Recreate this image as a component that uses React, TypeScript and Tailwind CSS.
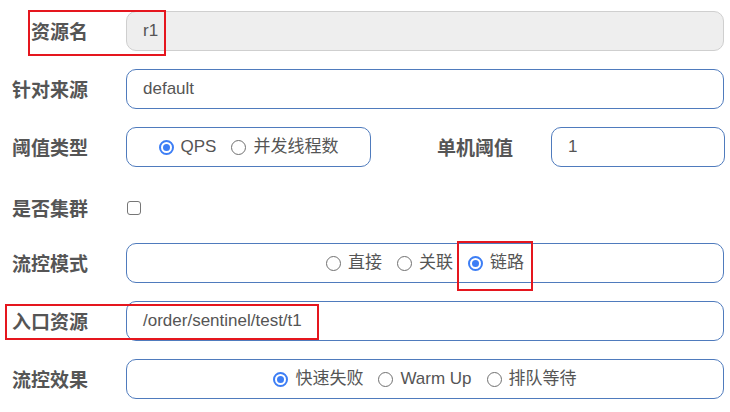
import React from 'react';

const font = { fontFamily: '"Liberation Sans", Arial, "Noto Sans CJK SC", sans-serif' };

function Radio({ label, checked }: { label: string; checked?: boolean }) {
  return (
    <span className="flex items-center gap-[7px]">
      {checked ? (
        <span className="flex h-[15px] w-[15px] items-center justify-center rounded-full border-2 border-[#3d7ef5] bg-white">
          <span className="h-[7px] w-[7px] rounded-full bg-[#3d7ef5]" />
        </span>
      ) : (
        <span className="h-[15px] w-[15px] rounded-full border border-[#707070] bg-white" />
      )}
      <span>{label}</span>
    </span>
  );
}

function Label({ text, className = 'w-[88px]' }: { text: string; className?: string }) {
  return <div className={`${className} shrink-0 pt-[4px] text-right text-[19px] font-bold text-[#555]`}>{text}</div>;
}

const box = 'h-[40px] rounded-[10px] border border-[#4f7bbd] bg-white';

export default function App() {
  return (
    <div className="relative h-[412px] w-[730px] overflow-hidden bg-white text-[17px] text-[#555]" style={font}>
      <div className="flex flex-col gap-[18px] pt-[11px]">
        <div className="flex h-[40px] items-center gap-[38px]">
          <Label text="资源名" />
          <div className="-mt-px flex h-[40px] w-[598px] items-center rounded-[10px] border border-[#cfcfcf] bg-[#eeeeee] pl-4">r1</div>
        </div>

        <div className="flex h-[40px] items-center gap-[38px]">
          <Label text="针对来源" />
          <div className={`${box} flex w-[598px] items-center pl-4`}>default</div>
        </div>

        <div className="flex h-[40px] items-center">
          <Label text="阈值类型" />
          <div className={`${box} ml-[38px] flex w-[245px] items-center justify-center gap-[15px]`}>
            <Radio label="QPS" checked />
            <Radio label="并发线程数" />
          </div>
          <Label text="单机阈值" className="w-[142px]" />
          <div className={`${box} ml-[38px] flex w-[174px] items-center pl-4`}>1</div>
        </div>

        <div className="flex h-[40px] items-center gap-[38px] pt-[6px]">
          <Label text="是否集群" />
          <span className="ml-px h-[14px] w-[14px] rounded-[3px] border border-[#767676] bg-white" />
        </div>

        <div className="flex h-[40px] items-center gap-[38px]">
          <Label text="流控模式" />
          <div className={`${box} flex w-[598px] items-center justify-center gap-[15px]`}>
            <Radio label="直接" />
            <Radio label="关联" />
            <Radio label="链路" checked />
          </div>
        </div>

        <div className="flex h-[40px] items-center gap-[38px]">
          <Label text="入口资源" />
          <div className={`${box} flex w-[598px] items-center pl-4`}>/order/sentinel/test/t1</div>
        </div>

        <div className="flex h-[40px] items-center gap-[38px]">
          <Label text="流控效果" />
          <div className={`${box} flex w-[598px] items-center justify-center gap-[15px]`}>
            <Radio label="快速失败" checked />
            <Radio label="Warm Up" />
            <Radio label="排队等待" />
          </div>
        </div>
      </div>

      {/* red annotation boxes */}
      <div className="absolute left-[28px] top-[10px] h-[46px] w-[138px] border-2 border-[#e5161e]" />
      <div className="absolute left-[457px] top-[241px] h-[50px] w-[76px] border-2 border-[#e5161e]" />
      <div className="absolute left-[5px] top-[304px] h-[36px] w-[314px] border-2 border-[#e5161e]" />
    </div>
  );
}
